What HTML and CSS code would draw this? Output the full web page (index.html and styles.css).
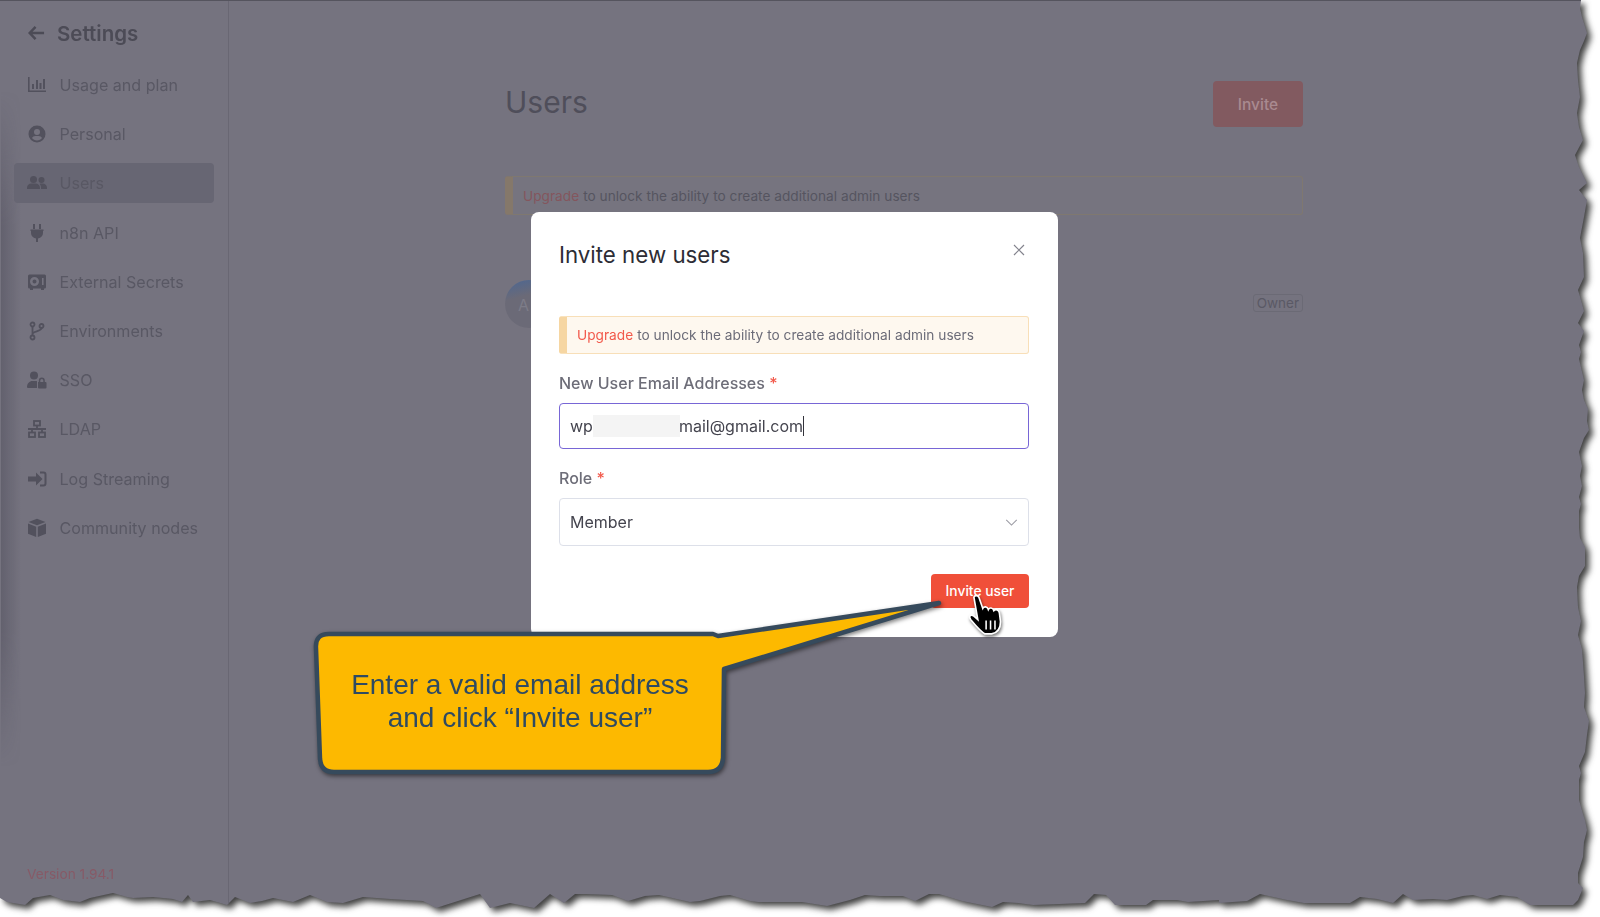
FILE: index.html
```html
<!DOCTYPE html>
<html lang="en">
<head>
  <meta charset="UTF-8" />
  <meta name="viewport" content="width=device-width, initial-scale=1" />
  <title>Invite new users</title>
  <link rel="stylesheet" href="styles.css">
</head>
<body>
  <div class="shot">
    <div class="sheet">
      <div class="page">

        <aside class="sidebar">
          <div class="side-head">
            <svg class="back" viewBox="0 0 18 16"><path d="M8 1.5 1.8 8 8 14.5M2.5 8H17" /></svg>
            <span>Settings</span>
          </div>
          <nav class="nav">
            <a class="nav-item">
              <svg class="ico" viewBox="0 0 20 20"><path d="M1 2h1.6v13.4H19V17H1z" /><path d="M5 9h2v5H5zM9 5h2v9H9zM12.500 8h2v6h-2zM16 4h2v10h-2z" /></svg>
              Usage and plan
            </a>
            <a class="nav-item">
              <svg class="ico" viewBox="0 0 20 20"><path fill-rule="evenodd" d="M10 1.500a8.500 8.500 0 1 0 0 17 8.500 8.500 0 0 0 0-17zm0 3.500a3 3 0 1 1 0 6 3 3 0 0 1 0-6zm0 11.500c-2 0-3.900-.9-5-2.400.6-1.300 1.900-2.100 3.300-2.100h3.400c1.400 0 2.700.8 3.300 2.100-1.100 1.500-3 2.400-5 2.400z" /></svg>
              Personal
            </a>
            <a class="nav-item active">
              <svg class="ico" viewBox="0 0 20 20"><circle cx="6.500" cy="6.500" r="3.500" /><circle cx="14.500" cy="7" r="3" /><path d="M0 15c0-2.800 2-4.500 4.500-4.500h4c2.500 0 4.500 1.700 4.500 4.500v1H0zM14 16v-1.500c0-1.400-.5-2.700-1.400-3.600.5-.3 1-.4 1.600-.4h1.300c2.500 0 4.500 1.800 4.500 4.200V16z" /></svg>
              Users
            </a>
            <a class="nav-item">
              <svg class="ico" viewBox="0 0 20 20"><path d="M6 1h2v5H6zM12 1h2v5h-2zM3.500 6.500h13V8H16v2c0 2.800-1.900 5-5 5.400V19H9v-3.600C5.900 15 4 12.800 4 10V8h-.5z" /></svg>
              n8n API
            </a>
            <a class="nav-item">
              <svg class="ico" viewBox="0 0 20 20"><path fill-rule="evenodd" d="M2.500 2.500h15A1.500 1.500 0 0 1 19 4v11a1.500 1.500 0 0 1-1.500 1.500H17V18h-3v-1.500H6V18H3v-1.500h-.5A1.500 1.500 0 0 1 1 15V4a1.500 1.500 0 0 1 1.500-1.500zM7.500 5a4.500 4.500 0 1 0 0 9 4.500 4.500 0 0 0 0-9zm0 2.500a2 2 0 1 1 0 4 2 2 0 0 1 0-4zM15 6h1.600v7H15z" /></svg>
              External Secrets
            </a>
            <a class="nav-item">
              <svg class="ico" viewBox="0 0 20 20"><g class="ico-line"><circle cx="5.500" cy="3.500" r="2" /><circle cx="5.500" cy="16.500" r="2" /><circle cx="14.500" cy="5" r="2" /><path d="M5.500 5.500v9M14.500 7c0 3.500-9 3-9 6" /></g></svg>
              Environments
            </a>
            <a class="nav-item">
              <svg class="ico" viewBox="0 0 20 20"><circle cx="7" cy="5.500" r="4" /><path d="M0 17c0-3.500 2.500-6 5.500-6h3c.6 0 1.100.1 1.500.2V18H1a1 1 0 0 1-1-1z" /><path fill-rule="evenodd" d="M11 12h.8v-1.500a3 3 0 0 1 6 0V12h.7a1 1 0 0 1 1 1v4.500a1 1 0 0 1-1 1H12a1 1 0 0 1-1-1zm2.300 0h3v-1.500a1.500 1.500 0 0 0-3 0z" /></svg>
              SSO
            </a>
            <a class="nav-item">
              <svg class="ico" viewBox="0 0 20 20"><g class="ico-line"><rect x="7" y="2" width="6" height="4.500" /><rect x="2" y="13.500" width="6" height="4.500" /><rect x="12" y="13.500" width="6" height="4.500" /><path d="M10 6.500V10M1 10h18M5 10v3.500M15 10v3.500" /></g></svg>
              LDAP
            </a>
            <a class="nav-item">
              <svg class="ico" viewBox="0 0 20 20"><path d="M9 3.500 15.500 10 9 16.500v-4H1v-5h8z" /><path d="M13 2.500h3.500a3 3 0 0 1 3 3v9a3 3 0 0 1-3 3H13v-2h3.500a1 1 0 0 0 1-1v-9a1 1 0 0 0-1-1H13z" /></svg>
              Log Streaming
            </a>
            <a class="nav-item">
              <svg class="ico" viewBox="0 0 20 20"><path d="M10 .800 18.500 4 10 7.300 1.500 4zM1 5.500l8.200 3.200V19L1 15.700zM19 5.500v10.200L10.800 19V8.700z" /></svg>
              Community nodes
            </a>
          </nav>
          <div class="version">Version 1.94.1</div>
        </aside>

        <main class="content">
          <div class="content-head">
            <h1>Users</h1>
            <button class="btn-invite" type="button">Invite</button>
          </div>
          <div class="alert alert-dim"><span class="upgrade">Upgrade</span> to unlock the ability to create additional admin users</div>
          <div class="user-row">
            <div class="avatar">A</div>
            <span class="badge">Owner</span>
          </div>
        </main>

        <div class="modal">
          <div class="modal-head">
            <h2>Invite new users</h2>
            <svg class="close" viewBox="0 0 12 12"><path d="M1 1l10 10M11 1 1 11" /></svg>
          </div>
          <div class="alert alert-modal"><span class="upgrade">Upgrade</span> to unlock the ability to create additional admin users</div>
          <label class="field-label">New User Email Addresses <span class="req">*</span></label>
          <div class="input input-focus">
            <span>wp</span><span class="redact"></span><span>mail@gmail.com</span><span class="caret"></span>
          </div>
          <label class="field-label field-role">Role <span class="req">*</span></label>
          <div class="input select">
            <span>Member</span>
            <svg class="chev" viewBox="0 0 14 8"><path d="M1 1l6 6 6-6" /></svg>
          </div>
          <div class="modal-foot">
            <button class="btn-primary" type="button">Invite user</button>
          </div>
        </div>

        <div class="callout">
          <svg class="callout-shape" viewBox="300 590 660 200">
            <path d="M329 634H713L718 636 939 603 724 669 723 758Q722 772 708 772H334Q321 772 320 759L316 648Q315 634 329 634Z" />
          </svg>
          <div class="callout-text">Enter a valid email address<br>and click “Invite user”</div>
        </div>

        <svg class="cursor" viewBox="0 0 32 37">
          <path class="hand" d="M6 3C6.500 1 9.500 1 10.500 3L14 13C15 11 18 11 19 14 20 12 23 12 24 15 25.500 13.500 28.500 14 29 17L30 25C30 31 27 35 22 36H16C12 34 8 29 3 23 1 20 3 18 6 20L9.500 23Z" />
          <path class="hand-lines" d="M17 24v8M21 24v8M25 24v8" />
        </svg>

      </div>
    </div>
  </div>
</body>
</html>
```

FILE: styles.css
```css
* {
  box-sizing: border-box;
}
body {
  margin: 0;
  font-family: Inter, "Noto Sans", sans-serif;
  background: #fff;
}
.shot {
  width: 1600px;
  height: 917px;
  overflow: hidden;
  background: #fff;
}
/* torn paper edge */
.sheet {
  height: 100%;
  filter: drop-shadow(4px 4px 3px rgba(30, 30, 30, 0.85));
}
.page {
  position: relative;
  display: flex;
  height: 100%;
  background: #75737f;
  border-top: 1px solid #55545e;
  clip-path: polygon(0 0, 1581px 0, 1580px 8px, 1582px 17px, 1587px 33px, 1584px 41px, 1580px 50px, 1577px 63px, 1578px 80px, 1580px 97px, 1577px 113px, 1579px 127px, 1583px 140px, 1575px 155px, 1579px 167px, 1587px 183px, 1579px 190px, 1587px 200px, 1584px 217px, 1580px 238px, 1583px 253px, 1584px 277px, 1578px 290px, 1581px 300px, 1584px 311px, 1578px 323px, 1584px 331px, 1579px 345px, 1581px 352px, 1579px 359px, 1584px 380px, 1582px 390px, 1584px 400px, 1588px 409px, 1587px 421px, 1589px 430px, 1584px 438px, 1579px 452px, 1582px 466px, 1580px 476px, 1582px 486px, 1579px 497px, 1581px 504px, 1579px 511px, 1579px 528px, 1580px 538px, 1585px 547px, 1585px 566px, 1579px 576px, 1577px 587px, 1578px 607px, 1581px 621px, 1578px 635px, 1582px 649px, 1583px 662px, 1584px 676px, 1585px 693px, 1584px 707px, 1589px 721px, 1587px 735px, 1585px 752px, 1579px 766px, 1581px 773px, 1579px 780px, 1579px 800px, 1583px 814px, 1585px 820px, 1587px 830px, 1584px 842px, 1583px 857px, 1578px 873px, 1578px 883px, 1583px 888px, 1578px 900px, 1573px 905px, 1530px 905px, 1517px 897px, 1500px 895px, 1487px 899px, 1473px 895px, 1463px 896px, 1447px 900px, 1433px 899px, 1413px 900px, 1403px 894px, 1393px 903px, 1377px 899px, 1360px 897px, 1350px 903px, 1320px 903px, 1304px 903px, 1287px 900px, 1260px 894px, 1247px 901px, 1219px 903px, 1219px 900px, 1188px 902px, 1177px 900px, 1153px 900px, 1146px 905px, 1115px 905px, 1106px 895px, 1094px 894px, 1085px 903px, 1033px 905px, 1018px 903px, 1003px 902px, 992px 907px, 962px 901px, 939px 894px, 929px 894px, 915px 901px, 903px 896px, 879px 896px, 865px 895px, 850px 900px, 827px 906px, 802px 902px, 776px 902px, 758px 902px, 750px 901px, 730px 895px, 720px 896px, 700px 901px, 690px 902px, 659px 895px, 645px 896px, 628px 901px, 612px 895px, 586px 894px, 575px 894px, 564px 903px, 550px 894px, 534px 908px, 510px 903px, 490px 908px, 480px 894px, 436px 908px, 423px 901px, 390px 899px, 363px 897px, 343px 903px, 327px 902px, 310px 895px, 293px 902px, 273px 898px, 262px 901px, 250px 903px, 235px 897px, 227px 905px, 210px 900px, 193px 902px, 188px 895px, 182px 902px, 173px 899px, 153px 897px, 133px 898px, 127px 897px, 113px 893px, 90px 898px, 80px 902px, 63px 900px, 50px 895px, 33px 898px, 25px 905px, 7px 902px, 0 898px);
}
/* dark fade down the left side */
.page::before {
  content: "";
  position: absolute;
  left: 1px;
  top: 90px;
  bottom: 150px;
  width: 20px;
  background: linear-gradient(to right, rgba(58, 56, 72, 0.3), rgba(58, 56, 72, 0));
  -webkit-mask-image: linear-gradient(to bottom, transparent, #000 20%, #000 80%, transparent);
  mask-image: linear-gradient(to bottom, transparent, #000 20%, #000 80%, transparent);
}

/* sidebar */
.sidebar {
  position: relative;
  display: flex;
  flex-direction: column;
  width: 229px;
  flex-shrink: 0;
  border-right: 1px solid #696773;
  padding: 0 14px 35px;
  color: #595864;
  font-size: 16.100px;
}
.side-head {
  display: flex;
  align-items: center;
  gap: 12px;
  padding: 7px 0 0 14px;
  height: 57px;
  font-size: 20.500px;
  font-weight: 600;
  color: #4c4b56;
}
.back {
  width: 17px;
  height: 16px;
  fill: none;
  stroke: #4c4b56;
  stroke-width: 2.600;
}
.nav {
  display: flex;
  flex-direction: column;
  gap: 9.200px;
  margin-top: 7px;
}
.nav-item {
  display: flex;
  align-items: center;
  gap: 12.500px;
  height: 40px;
  padding-left: 13px;
  border-radius: 4px;
}
.nav-item.active {
  background: #676673;
}
.ico {
  width: 20px;
  height: 20px;
  flex-shrink: 0;
  fill: #52515d;
}
.ico-line {
  fill: none;
  stroke: #52515d;
  stroke-width: 1.800;
}
.version {
  margin-top: auto;
  padding-left: 13px;
  font-size: 13.700px;
  color: #875a67;
}

/* page behind the modal */
.content {
  width: 798px;
  margin-left: 276px;
  padding-top: 80px;
}
.content-head {
  display: flex;
  justify-content: space-between;
  align-items: center;
  margin-bottom: 49px;
}
h1 {
  margin: 0 0 4px;
  font-size: 30px;
  font-weight: 400;
  color: #4f4e5a;
}
.btn-invite {
  width: 90px;
  height: 46px;
  border: none;
  border-radius: 4px;
  background: #825a60;
  color: #a98a90;
  font: 500 15.500px Inter, sans-serif;
}
.alert {
  height: 39px;
  display: flex;
  align-items: center;
  gap: 4px;
  padding-left: 10px;
  border: 1px solid #f8dfb8;
  border-left: 8px solid #f6d6a2;
  border-radius: 3px;
  background: #fef8ef;
  font-size: 13.700px;
  color: #6c6c78;
}
.alert-modal {
  height: 38px;
}
.upgrade {
  color: #f2594b;
}
.alert-dim {
  border-color: #7f7870;
  border-left-color: #85786a;
  background: #76747f;
  color: #55545f;
}
.alert-dim .upgrade {
  color: #84565d;
}
.user-row {
  display: flex;
  justify-content: space-between;
  align-items: center;
  margin-top: 63px;
}
.avatar {
  width: 48px;
  height: 48px;
  margin-top: 2px;
  border-radius: 50%;
  padding: 15px 0 0 13px;
  background: linear-gradient(165deg, #50678f 5%, #6b6a77 35%);
  color: #7d7c88;
}
.badge {
  padding: 0 3px;
  height: 18px;
  line-height: 16px;
  border: 1px solid #6b6a75;
  border-radius: 3px;
  font-size: 13.500px;
  color: #5a5965;
}

/* modal */
.modal {
  position: absolute;
  left: 531px;
  top: 211px;
  width: 527px;
  height: 425px;
  padding: 0 29px 0 28px;
  border-radius: 8px;
  background: #fff;
}
.modal-head {
  display: flex;
  justify-content: space-between;
  height: 104px;
  padding-top: 29px;
}
h2 {
  margin: 0;
  font-size: 22.300px;
  line-height: 28px;
  font-weight: 400;
  color: #2d2d35;
}
.close {
  width: 12px;
  height: 12px;
  margin: 3px 4px 0 0;
  fill: none;
  stroke: #83838d;
  stroke-width: 1.200;
}
.field-label {
  display: block;
  margin-top: 18px;
  height: 22px;
  line-height: 22px;
  font-size: 16px;
  font-weight: 500;
  color: #6d6d78;
}
.req {
  color: #f2594b;
}
.input {
  display: flex;
  align-items: center;
  height: 48px;
  margin-top: 9px;
  padding: 0 10px;
  border: 1px solid #dde0e9;
  border-radius: 4px;
  font-size: 16px;
  color: #44444e;
}
.input-focus {
  height: 46px;
  border-color: #7866d6;
}
.redact {
  width: 87px;
  height: 22px;
  margin-right: -1px;
  background: #f4f4f4;
}
.caret {
  width: 1px;
  height: 20px;
  background: #33333b;
}
.select {
  justify-content: space-between;
}
.chev {
  width: 13px;
  height: 7px;
  fill: none;
  stroke: #9a9aa3;
  stroke-width: 1.200;
}
.modal-foot {
  display: flex;
  justify-content: flex-end;
  margin-top: 28px;
}
.btn-primary {
  width: 98px;
  height: 34px;
  border: none;
  border-radius: 4px;
  background: #f04f39;
  color: #fff;
  font: 500 13.800px Inter, sans-serif;
}

/* callout and pointer on top of everything */
.callout {
  position: absolute;
  left: 300px;
  top: 589px;
  width: 660px;
  height: 200px;
}
.callout-shape {
  position: absolute;
  inset: 0;
  overflow: visible;
  filter: drop-shadow(1px 2px 2px rgba(0, 0, 0, 0.5));
}
.callout-shape path {
  fill: #fdb900;
  stroke: #364a5c;
  stroke-width: 4.500;
  stroke-linejoin: round;
}
.callout-text {
  position: absolute;
  left: 20px;
  top: 78px;
  width: 400px;
  text-align: center;
  font-family: "Liberation Sans", Arial, sans-serif;
  font-size: 28px;
  line-height: 33px;
  color: #2e4a62;
}
.cursor {
  position: absolute;
  left: 967px;
  top: 593px;
  width: 36px;
  height: 41px;
  overflow: visible;
  filter: drop-shadow(1px 2px 1.500px rgba(0, 0, 0, 0.5));
}
.hand {
  fill: #000;
  stroke: #fff;
  stroke-width: 1.500;
}
.hand-lines {
  fill: none;
  stroke: #fff;
  stroke-width: 1.400;
}
```
